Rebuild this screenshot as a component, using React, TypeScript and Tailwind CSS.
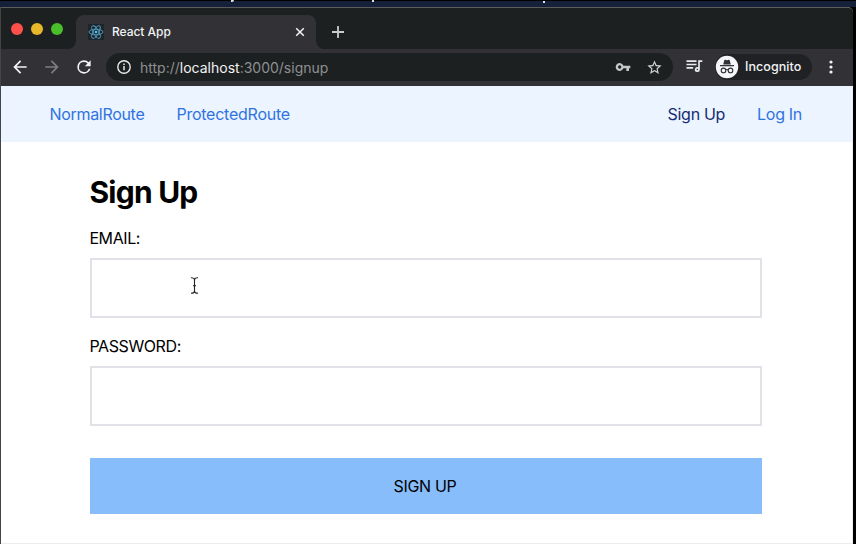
import React from "react";

const Reload = () => (
  <svg width="20" height="20" viewBox="0 0 24 24" fill="#f1f3f4">
    <path d="M17.65 6.35A7.96 7.96 0 0 0 12 4a8 8 0 1 0 7.73 10h-2.08A6 6 0 1 1 12 6c1.66 0 3.14.69 4.22 1.78L13 11h7V4z" />
  </svg>
);

const Arrow = ({ forward = false }: { forward?: boolean }) => (
  <svg width="20" height="20" viewBox="0 0 24 24" fill={forward ? "#7c7e80" : "#f1f3f4"}>
    <path d={forward ? "M12 4l-1.41 1.41L16.17 11H4v2h12.17l-5.58 5.59L12 20l8-8z" : "M20 11H7.83l5.59-5.59L12 4l-8 8 8 8 1.41-1.41L7.83 13H20z"} />
  </svg>
);

const ReactLogo = () => (
  <svg width="16" height="16" viewBox="0 0 16 16" fill="none" stroke="#4d9fc4" strokeWidth="0.9">
    <rect width="16" height="16" fill="#1f252b" stroke="none" />
    <ellipse cx="8" cy="8" rx="7" ry="2.7" />
    <ellipse cx="8" cy="8" rx="7" ry="2.7" transform="rotate(60 8 8)" />
    <ellipse cx="8" cy="8" rx="7" ry="2.7" transform="rotate(120 8 8)" />
    <circle cx="8" cy="8" r="1.3" fill="#61c5ee" stroke="none" />
  </svg>
);

const Tab = () => (
  <div className="relative flex h-[34px] w-[240px] items-center rounded-t-[8px] bg-[#323236] pl-3 pr-[10px]">
    <svg className="absolute -left-2 bottom-0" width="8" height="8"><path d="M8 0v8H0a8 8 0 0 0 8-8" fill="#323236" /></svg>
    <svg className="absolute -right-2 bottom-0" width="8" height="8"><path d="M0 0v8h8a8 8 0 0 1-8-8" fill="#323236" /></svg>
    <ReactLogo />
    <span className="ml-2 text-[12px] font-medium tracking-[-0.04px] text-[#f1f3f4]">React App</span>
    <svg className="ml-auto" width="12" height="12" viewBox="0 0 12 12" stroke="#f1f3f4" strokeWidth="1.5"><path d="M2.2 2.2l7.6 7.6M9.8 2.2L2.2 9.8" /></svg>
  </div>
);

const Toolbar = () => (
  <div className="flex h-[37px] shrink-0 items-center bg-[#323236] pb-px pl-[9px]">
    <Arrow />
    <span className="ml-[12px]"><Arrow forward /></span>
    <span className="ml-[12px]"><Reload /></span>
    <div className="ml-[12px] flex h-7 w-[567px] items-center rounded-full bg-[#1d2021] pl-[10px] pr-[10px]">
      <svg width="16" height="16" viewBox="0 0 16 16" fill="none" stroke="#e8eaed" strokeWidth="1.4">
        <circle cx="8" cy="8" r="6.2" /><path d="M8 7v4.2M8 4.5v1.5" strokeWidth="1.5" />
      </svg>
      <div className="ml-2 text-[14px] tracking-[0px] text-[#8d9092]">http://<span className="text-[#f1f3f4]">localhost</span>:3000/signup</div>
      <svg className="ml-auto" width="16" height="16" viewBox="0 0 24 24" fill="#c4c6c8">
        <path d="M12.65 10A6 6 0 1 0 12.65 14H17v4h4v-4h2v-4zM7 14.5a2.5 2.5 0 1 1 0-5 2.5 2.5 0 0 1 0 5z" />
      </svg>
      <svg className="ml-[15px]" width="17" height="17" viewBox="0 0 24 24" fill="#d4d6d8">
        <path d="M22 9.24l-7.19-.62L12 2 9.19 8.63 2 9.24l5.46 4.73L5.82 21 12 17.27 18.18 21l-1.63-7.03zM12 15.4l-3.76 2.27 1-4.28-3.32-2.88 4.38-.38L12 6.1l1.71 4.04 4.38.38-3.32 2.88 1 4.28z" />
      </svg>
    </div>
    <svg className="ml-[11px]" width="20" height="20" viewBox="0 0 24 24" fill="#e8eaed">
      <path d="M3 4h12v2H3zM3 8h12v2H3zM3 12h8v2H3zM17 4h5v2h-3v9a3 3 0 1 1-2-2.82zM16 14a1 1 0 1 0 0 2 1 1 0 0 0 0-2z" />
    </svg>
    <div className="ml-[11px] flex h-[26px] w-[97px] items-center rounded-full bg-[#202124]">
      <svg width="24" height="24" viewBox="0 0 24 24">
        <circle cx="12" cy="12" r="11.2" fill="#f4f6f9" />
        <path d="M8.2 9.5l1.1-4.2q.2-.7.9-.5l1.8.5 1.8-.5q.7-.2.9.5l1.1 4.2z" fill="#303236" />
        <path d="M5 10.7h14M10.6 15q1.4-1 2.8 0" stroke="#303236" strokeWidth="1.2" fill="none" />
        <circle cx="8.5" cy="15.4" r="2.3" fill="none" stroke="#303236" strokeWidth="1.1" />
        <circle cx="15.5" cy="15.4" r="2.3" fill="none" stroke="#303236" strokeWidth="1.1" />
      </svg>
      <span className="ml-[6px] text-[12.5px] font-medium tracking-[0.05px] text-[#f1f3f4]">Incognito</span>
    </div>
    <svg className="ml-[16px]" width="6" height="16" viewBox="0 0 6 16" fill="#f1f3f4"><circle cx="3" cy="3" r="1.6" /><circle cx="3" cy="8" r="1.6" /><circle cx="3" cy="13" r="1.6" /></svg>
  </div>
);

const Field = ({ id, label, type }: { id: string; label: string; type: string }) => (
  <div>
    <label htmlFor={id} className="-ml-[0.6px] block h-6 text-[16px] leading-6 tracking-[-0.4px]">{label}</label>
    <input id={id} type={type} className="mt-2 block h-[60px] w-full border-2 border-[#e1e2e8] bg-white px-4 outline-none" />
  </div>
);

export default function App() {
  return (
    <div className="relative flex h-[544px] w-[856px] flex-col overflow-hidden bg-black font-[Inter,'Liberation_Sans',sans-serif]">
      <div className="relative h-[7px] shrink-0 border-t border-black bg-[#172039]">
        <span className="absolute left-[231px] -top-px h-[2px] w-[3px] rounded-br-[2px] bg-[#dedede]" />
        <span className="absolute left-[372px] -top-px h-[2px] w-[2px] bg-[#dedede]" />
        <span className="absolute left-[543px] top-0 h-[2px] w-[2px] bg-[#dedede]" />
      </div>
      <div className="flex h-[537px] w-[853px] flex-col rounded-tr-[5px] border-l border-t border-l-[#454548] border-t-[#5d5b5e] bg-white">
        <div className="flex h-[41px] shrink-0 items-end rounded-tr-[4px] bg-[#1d2021]">
          <div className="mb-[14px] ml-[10px] mr-[13px] flex gap-2">
            <span className="size-3 rounded-full bg-[#ff504c]" />
            <span className="size-3 rounded-full bg-[#e6b82a]" />
            <span className="size-3 rounded-full bg-[#49bf2b]" />
          </div>
          <Tab />
          <svg className="mb-[10px] ml-[15px]" width="14" height="14" stroke="#c9cbcd" strokeWidth="1.8"><path d="M7 1v12M1 7h12" /></svg>
        </div>
        <Toolbar />
        <div className="flex min-h-0 flex-1 flex-col border-b border-r border-[#ececef] bg-white">
          <nav className="flex h-14 shrink-0 items-center bg-[#ebf4ff] pl-[48.5px] pr-[49px] text-[16px] text-[#2f73e2]">
            <a className="tracking-[-0.31px]">NormalRoute</a>
            <a className="ml-8 tracking-[-0.24px]">ProtectedRoute</a>
            <a className="ml-auto tracking-[-0.3px] text-[#152c72]">Sign Up</a>
            <a className="ml-8 mr-[1px] tracking-[-0.3px]">Log In</a>
          </nav>
          <main className="ml-[89px] w-[672px] text-black">
            <h1 className="-ml-[0.6px] mt-[29px] h-[42px] text-[30px] font-bold leading-[42px] tracking-[-0.75px]">Sign Up</h1>
            <form className="mt-[13px] flex flex-col">
              <Field id="email" label="EMAIL:" type="email" />
              <div className="mt-4"><Field id="password" label="PASSWORD:" type="password" /></div>
              <button type="button" className="mt-8 h-14 bg-[#88bdfb] pr-[2px] text-[16px] tracking-[-0.3px]">SIGN UP</button>
            </form>
          </main>
        </div>
      </div>
      <svg className="absolute left-[190px] top-[277px]" width="9" height="17" fill="none" stroke="#222" strokeWidth="1.1"><path d="M1 .8q3.5 0 3.5 2v11.4q0 2-3.5 2M8 .8q-3.5 0-3.5 2M8 16.2q-3.5 0-3.5-2M3 8.8h3" /></svg>
    </div>
  );
}
